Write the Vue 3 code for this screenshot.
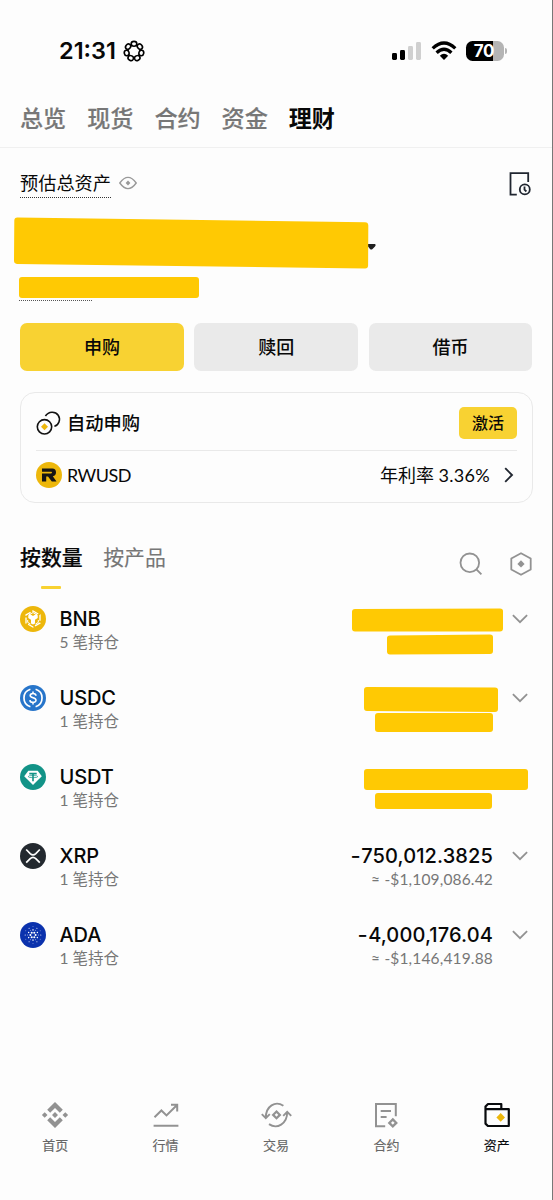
<script setup>
const accountTabs = ['总览', '现货', '合约', '资金', '理财']
const actions = ['申购', '赎回', '借币']

const assets = [
  {
    name: 'BNB', count: 5, icon: 'bnb', chevron: true,
    mask: ['M15 3 L160 2.5 Q163 2.5 163 5 L163 22.5 Q163 25.5 160 25.5 L15 25.5 Q12 25.5 12 22.5 L12 6 Q12 3 15 3Z', 'M50 29.5 L150 28.5 Q153 28.5 153 31 L153 45 Q153 48 150 48 L50 48.5 Q47 48.5 47 45.5 L47 32 Q47 29.5 50 29.5Z'],
  },
  {
    name: 'USDC', count: 1, icon: 'usdc', chevron: true,
    mask: ['M27 2 L155 2.5 Q158 2.5 158 5 L158 24 Q158 27 155 27 L27 26 Q24 26 24 23 L24 5 Q24 2 27 2Z', 'M38 28 L150 28 Q153 28 153 31 L153 44 Q153 47 150 47 L38 47 Q35 47 35 44 L35 31 Q35 28 38 28Z'],
  },
  {
    name: 'USDT', count: 1, icon: 'usdt', chevron: false,
    mask: ['M27 5 L185 5 Q188 5 188 8 L188 23 Q188 26 185 26 L27 26 Q24 26 24 23 L24 8 Q24 5 27 5Z', 'M38 29 L149 29 Q152 29 152 32 L152 42 Q152 45 149 45 L38 45 Q35 45 35 42 L35 32 Q35 29 38 29Z'],
  },
  { name: 'XRP', count: 1, icon: 'xrp', chevron: true, amount: '750,012.3825', usd: '$1,109,086.42' },
  { name: 'ADA', count: 1, icon: 'ada', chevron: true, amount: '4,000,176.04', usd: '$1,146,419.88' },
]

function ring(count, radius, size, phase = 0) {
  return Array.from({ length: count }, (_, i) => {
    const a = ((i + phase) / count) * Math.PI * 2
    return { x: 13 + Math.cos(a) * radius, y: 13 + Math.sin(a) * radius, r: size }
  })
}
const adaDots = [...ring(6, 2.6, 1.05), ...ring(6, 5, 0.7, 0.5), ...ring(12, 5.4, 0.45), ...ring(6, 7.8, 0.55), ...ring(6, 8.3, 0.4, 0.5)]

const petals = Array.from({ length: 7 }, (_, i) => (i * 360) / 7)
const nav = ['首页', '行情', '交易', '合约', '资产']
</script>

<template>
  <div class="screen">
    <header class="status">
      <span class="time">21:31</span>
      <svg class="flower" width="22" height="22" viewBox="0 0 22 22" fill="none" stroke="#000" stroke-width="1.6">
        <circle cx="11" cy="11.3" r="6.5" />
        <ellipse v-for="a in petals" :key="a" cx="11" cy="3.8" rx="2.8" ry="2.4" fill="#fdfdfd" :transform="`rotate(${a} 11 11.3)`" />
      </svg>
      <svg class="signal" width="30" height="20" viewBox="0 0 30 20">
        <rect x="0" y="12" width="5" height="7" rx="1.4" />
        <rect x="8" y="9" width="5" height="10" rx="1.4" />
        <rect x="16" y="5" width="5" height="14" rx="1.4" fill="#d0d0d0" />
        <rect x="24" y="1" width="5" height="18" rx="1.4" fill="#d0d0d0" />
      </svg>
      <svg class="wifi" width="26" height="20" viewBox="0 0 26 20" fill="none" stroke="#000" stroke-width="3.3">
        <path d="M1.7 7.4 Q13-3.4 24.3 7.4" />
        <path d="M5.6 11.7 Q13 4.6 20.4 11.7" />
        <path d="M8.8 14.7 Q13 10.8 17.2 14.7 L13 19Z" fill="#000" stroke="none" />
      </svg>
      <div class="battery"><span>70</span></div>
      <i class="cap"></i>
    </header>

    <nav class="tabs">
      <span v-for="t in accountTabs" :key="t" :class="{ on: t === '理财' }">{{ t }}</span>
    </nav>

    <section class="summary">
      <div class="summary-head">
        <span class="estimate">预估总资产</span>
        <svg class="eye" width="18" height="14" viewBox="0 0 18 14" fill="none" stroke="#999" stroke-width="1.4">
          <path d="M.8 7 Q9-4.2 17.2 7 Q9 18.2 .8 7Z" />
          <path d="M9 4.6 L11.4 7 L9 9.4 L6.6 7Z" fill="#999" stroke="none" />
        </svg>
        <svg class="history" width="24" height="26" viewBox="0 0 24 26" fill="none" stroke="#202630" stroke-width="1.8">
          <path d="M8.8 23.6 H2.5 V2.2 H20.2 V11" />
          <circle cx="16.8" cy="18.4" r="5" />
          <path d="M16.5 15.4 V18.7 L18.4 20.5" />
        </svg>
      </div>
      <svg class="balance" width="370" height="56" viewBox="0 0 370 56">
        <path d="M352 30 H361 Q362.5 31 361 32.4 L358.5 35 Q357.3 36.1 356 35Z" fill="#202020" />
        <path d="M3.5 3.5 L351 8.2 Q354.3 8.3 354.3 11.5 L354.1 51.5 Q354 54.6 351 54.5 L3 49.9 Q0 49.7 0 46.5 L.3 6.5 Q.4 3.4 3.5 3.5Z" fill="#ffc903" />
      </svg>
      <div class="profit"><i></i></div>
    </section>

    <div class="actions">
      <button v-for="(a, i) in actions" :key="a" :class="{ primary: i === 0 }">{{ a }}</button>
    </div>

    <section class="card">
      <div class="auto">
        <svg width="26" height="26" viewBox="0 0 26 26" fill="none" stroke="#111" stroke-width="1.6">
          <circle cx="8.5" cy="16.8" r="7.2" />
          <path d="M9.4 6 C12.6 1.2 19.2 1 22.2 5.2 C25.1 9.5 22.6 15.2 18.4 16.2" />
          <path d="M8.5 13.3 L12 16.8 L8.5 20.3 L5 16.8Z" fill="#edb70b" stroke="none" />
        </svg>
        <b>自动申购</b>
        <button>激活</button>
      </div>
      <div class="rate">
        <svg width="26" height="26" viewBox="0 0 26 26">
          <circle cx="13" cy="13" r="13" fill="#edb70b" />
          <path d="M6 6.5 H16.3 Q20 6.8 20 10.3 Q20 13.8 16.8 14.2 L20.5 19.5 H15.8 L12 14.5 H10.2 V19.5 H6 V11.4 H15.1 Q16 11 16 10.5 Q16 10 15.3 9.8 H6Z" fill="#151515" />
        </svg>
        <span class="token">RWUSD</span>
        <span class="apr">年利率 <em>3.36%</em></span>
        <svg class="next" width="10" height="16" viewBox="0 0 10 16" fill="none" stroke="#202630" stroke-width="1.9"><path d="M1.2 1.2 L8 8 L1.2 14.8" /></svg>
      </div>
    </section>

    <div class="views">
      <span class="on">按数量</span>
      <span>按产品</span>
      <svg class="search" width="24" height="24" viewBox="0 0 24 24" fill="none" stroke="#929292" stroke-width="1.8">
        <circle cx="10.8" cy="10.8" r="9.3" /><path d="M17.4 17.4 L22.4 22.4" />
      </svg>
      <svg width="24" height="24" viewBox="0 0 24 24" fill="none" stroke="#929292" stroke-width="1.8">
        <path d="M12 1.2 L21.7 6.5 V17.5 L12 22.8 L2.3 17.5 V6.5Z" stroke-linejoin="round" />
        <path d="M12 8.3 L15.6 11.9 L12 15.5 L8.4 11.9Z" fill="#929292" stroke="none" />
      </svg>
    </div>

    <main class="assets">
      <article v-for="a in assets" :key="a.name" class="asset">
        <svg class="coin" width="26" height="26" viewBox="0 0 26 26">
          <template v-if="a.icon === 'bnb'">
            <circle cx="13" cy="13" r="13" fill="#edb70b" />
            <g fill="none" stroke="#fff" stroke-width="1.3">
              <path d="M13 5 L20 9 V17 L13 21 L6 17 V9Z" stroke-dasharray="6 1.9" />
              <path d="M9 8.8 L13 6.6 L17 8.8 M7.7 14 V16.4 L10.5 18 M18.3 14 V16.4 L15.5 18" stroke-width="1" />
            </g>
            <path d="M8.3 9.3 L10.3 8.3 L13 10 L15.7 8.3 L17.7 9.3 V12 L15 13.7 V17.4 L13 18.6 L11 17.4 V13.7 L8.3 12Z" fill="#fff" />
          </template>
          <template v-else-if="a.icon === 'usdc'">
            <circle cx="13" cy="13" r="13" fill="#2775ca" />
            <g fill="none" stroke="#fff" stroke-width="1.7">
              <path d="M10.4 4.3 A9.1 9.1 0 0 0 10.4 21.7 M15.6 4.3 A9.1 9.1 0 0 1 15.6 21.7" />
              <path d="M16 10.8 C15.8 7.8 10.2 7.8 10.2 10.6 C10.2 13.4 16 12.3 16 15.2 C16 18.2 10 18.1 9.9 15.1 M13 6.5 V8.9 M13 17.2 V19.6" stroke-width="1.6" />
            </g>
          </template>
          <template v-else-if="a.icon === 'usdt'">
            <circle cx="13" cy="13" r="13" fill="#129387" />
            <path d="M8.3 6.7 H17.7 L21.8 12.3 L13 21 L4.2 12.3Z" fill="#fff" />
            <path d="M9.3 9.6 H16.7 M13 9.6 V17.2" fill="none" stroke="#129387" stroke-width="1.6" />
            <ellipse cx="13" cy="12.6" rx="4.8" ry="1.1" fill="none" stroke="#129387" stroke-width=".7" />
          </template>
          <template v-else-if="a.icon === 'xrp'">
            <circle cx="13" cy="13" r="13" fill="#23292f" />
            <path d="M6.2 6.5 L10.2 10.6 Q13 13.2 15.8 10.6 L19.8 6.5 M6.2 19.6 L10.2 15.6 Q13 13 15.8 15.6 L19.8 19.6" fill="none" stroke="#fff" stroke-width="1.7" />
          </template>
          <template v-else>
            <circle cx="13" cy="13" r="13" fill="#0b32ad" />
            <circle v-for="(d, i) in adaDots" :key="i" :cx="d.x" :cy="d.y" :r="d.r" fill="#fff" />
          </template>
        </svg>
        <div class="label">
          <strong>{{ a.name }}</strong>
          <small>{{ a.count }} 笔持仓</small>
        </div>
        <div v-if="a.amount" class="value">
          <strong><i>-</i>{{ a.amount }}</strong>
          <small>≈ <i>-</i>{{ a.usd }}</small>
        </div>
        <svg v-else class="mask" width="190" height="52" viewBox="0 0 190 52" fill="#ffc903">
          <path v-for="m in a.mask" :key="m" :d="m" />
        </svg>
        <svg v-if="a.chevron" class="chevron" width="16" height="10" viewBox="0 0 16 10" fill="none" stroke="#929292" stroke-width="1.8"><path d="M.9 1.2 L8 8.2 L15.1 1.2" /></svg>
      </article>
    </main>

    <footer class="bottom">
      <div v-for="(n, i) in nav" :key="n" :class="{ on: i === 4 }">
        <svg width="30" height="28" viewBox="0 0 30 28" fill="none" stroke="#929292" stroke-width="2">
          <g v-if="i === 0" fill="#929292" stroke="none">
            <path d="M15 1 L22.8 8.8 L19.8 11.8 L15 7 L10.2 11.8 L7.2 8.8Z M15 27 L22.8 19.2 L19.8 16.2 L15 21 L10.2 16.2 L7.2 19.2Z M4.7 11.2 L7.5 14 L4.7 16.8 L1.9 14Z M25.3 11.2 L28.1 14 L25.3 16.8 L22.5 14Z M15 11 L18 14 L15 17 L12 14Z" />
          </g>
          <g v-else-if="i === 1"><path d="M3.5 16.2 L10.4 9.5 L15.5 14.4 L25.8 4.2 M20 3.8 H26.2 V10.4 M2.6 24.8 H27.4" /></g>
          <g v-else-if="i === 2">
            <path d="M22.4 4.8 C14.4-.6 4.7 5 4.8 17 M.8 13.2 L4.8 17.2 L8.8 13.2 M8 23.1 C16 28.7 26.3 22.8 26.2 11 M22.2 14.8 L26.2 10.8 L30.2 14.8" stroke-width="1.9" />
            <path d="M15.5 10.5 L18.9 13.9 L15.5 17.3 L12.1 13.9Z" stroke-width="2.2" />
          </g>
          <g v-else-if="i === 3">
            <path d="M14.2 25.2 H5 V3 H24.8 V15.2 M9.7 10 H20 M9.7 16 H15.6" />
            <path d="M21.8 18.4 L25.3 21.9 L21.8 25.4 L18.3 21.9Z" stroke-width="2.3" />
          </g>
          <g v-else stroke="#080a0d" stroke-width="2.2">
            <path d="M19.3 8 V3 H6 L3.5 5.5 V22.6 L5.9 25 H26.8 V8.2 H3.5" stroke-linejoin="round" />
            <path d="M18.7 12.1 L23 16.4 L18.7 20.7 L14.4 16.4Z" fill="#edb70b" stroke="none" />
          </g>
        </svg>
        <span>{{ n }}</span>
      </div>
    </footer>
  </div>
</template>

<style>
body { background: #fdfdfd; }
</style>

<style scoped>
* { box-sizing: border-box; }
.screen { width: 553px; height: 1200px; display: flex; flex-direction: column; background: #fdfdfd; border-right: 1px solid #777; color: #080808; font-family: "Noto Sans CJK SC", sans-serif; overflow: hidden; }
svg { display: block; flex: none; overflow: visible; }
button { border: 0; padding: 0; font-family: inherit; color: inherit; }
.status { height: 87px; flex: none; display: flex; align-items: center; padding: 16px 0 2px 59px; }
.time { width: 64px; font: 600 23.5px/28px Inter, sans-serif; letter-spacing: 0; white-space: nowrap; }
.signal { margin-left: 247px; }
.wifi { margin-left: 9px; }
.battery { margin-left: 9px; width: 38px; height: 20px; border-radius: 6.5px; background: linear-gradient(90deg, #000 0 27px, #b4b4b4 27px); color: #fff; font: 700 17px/20px Inter, sans-serif; letter-spacing: -.4px; text-align: center; }
.battery span { display: block; padding-right: 2px; }
.cap { width: 2px; height: 6px; margin-left: 1px; border-radius: 0 3px 3px 0; background: #b4b4b4; }
.tabs { height: 61px; flex: none; border-bottom: 1px solid #f0f0f0; display: flex; gap: 21px; padding: 13px 0 0 20px; font-size: 23.1px; line-height: 34px; font-weight: 500; color: #777; -webkit-text-stroke: .2px currentColor; }
.tabs .on { color: #080808; font-weight: 700; -webkit-text-stroke: 0; }
.summary { height: 175px; flex: none; }
.summary-head { height: 66px; display: flex; align-items: flex-start; padding: 21px 20px 0 20px; }
.estimate { height: 29px; font-size: 18.2px; line-height: 27px; border-bottom: 1px dotted #333; }
.eye { margin: 7px 0 0 8px; }
.history { margin: 2px 0 0 auto; }
.balance { margin-left: 14px; }
.profit { width: 73px; height: 24px; margin: 7px 0 0 19px; border-bottom: 1px dotted #555; }
.profit i { display: block; width: 180px; height: 21px; border-radius: 3px; background: #ffc903; }
.actions { height: 48px; flex: none; margin: 0 19.5px 0 20px; display: grid; grid-template-columns: repeat(3, 1fr); gap: 10.5px; }
.actions button { height: 48px; border-radius: 7px; background: #eaeaea; font-size: 18px; font-weight: 500; line-height: 45px; padding-bottom: 2px; }
.actions .primary { background: #f8d232; }
.card { height: 111px; flex: none; margin: 21px 19.5px 0 20px; border: 1px solid #e9e9e9; border-radius: 15px; padding: 0 14.5px 0 15px; }
.auto { height: 58px; display: flex; align-items: center; padding-top: 3px; border-bottom: 1px solid #e9e9e9; }
.auto b { margin: -2px 0 0 5px; font-size: 18.3px; font-weight: 500; line-height: 28px; }
.auto button { width: 58px; height: 32px; margin-left: auto; border-radius: 5px; background: #f8d232; font-size: 16px; font-weight: 500; line-height: 30px; padding-bottom: 2px; }
.rate { height: 48px; display: flex; align-items: center; font-size: 18px; line-height: 28px; }
.rate > span { margin: -1px 0 0 5px; font-family: Lato, "Noto Sans CJK SC", sans-serif; }
.rate .token { letter-spacing: -.5px; }
.rate .apr { margin-left: auto; }
.apr em { font-style: normal; letter-spacing: .3px; }
.next { margin: 0 3px 0 14px; }
.views { height: 103px; flex: none; display: flex; align-items: flex-start; padding: 38px 19.5px 0 20px; font-size: 20.9px; line-height: 30px; color: #777; }
.views span { height: 48px; margin-right: 20.5px; white-space: nowrap; -webkit-text-stroke: .1px currentColor; }
.views .on { display: flex; flex-direction: column; align-items: center; color: #080808; font-weight: 500; -webkit-text-stroke: .2px currentColor; }
.views .on::after { content: ""; width: 20px; height: 4px; margin-top: 15px; border-radius: 1px; background: #f8d232; }
.views .search { margin: 11px 26px 0 auto; }
.views svg:last-child { margin-top: 11px; }
.assets { flex: 1; }
.asset { height: 79px; display: flex; align-items: flex-start; padding-left: 20px; }
.label { margin-left: 13px; padding-left: .5px; width: 281px; }
.label strong, .value strong { display: block; font: 500 20px/27px Inter, sans-serif; letter-spacing: -.1px; white-space: nowrap; }
.value strong { letter-spacing: .12px; }
.label small, .value small { display: block; margin-top: -2px; font: 400 15.5px/22px Lato, "Noto Sans CJK SC", sans-serif; color: #777; white-space: nowrap; }
.value small { letter-spacing: .16px; }
.value i { display: inline-block; font-style: normal; }
.value strong i { margin-right: .5px; transform: scaleX(1.1); }
.value { width: 153px; text-align: right; white-space: nowrap; }
.mask { margin-right: -37px; }
.chevron { margin: 8px 0 0 18.5px; }
.bottom { height: 105px; flex: none; display: grid; grid-template-columns: repeat(5, 1fr); padding-top: 6px; }
.bottom div { display: flex; flex-direction: column; align-items: center; color: #666; }
.bottom span { margin-top: 6px; font-size: 13px; line-height: 20px; -webkit-text-stroke: .15px currentColor; }
.bottom .on { color: #080a0d; }
</style>
